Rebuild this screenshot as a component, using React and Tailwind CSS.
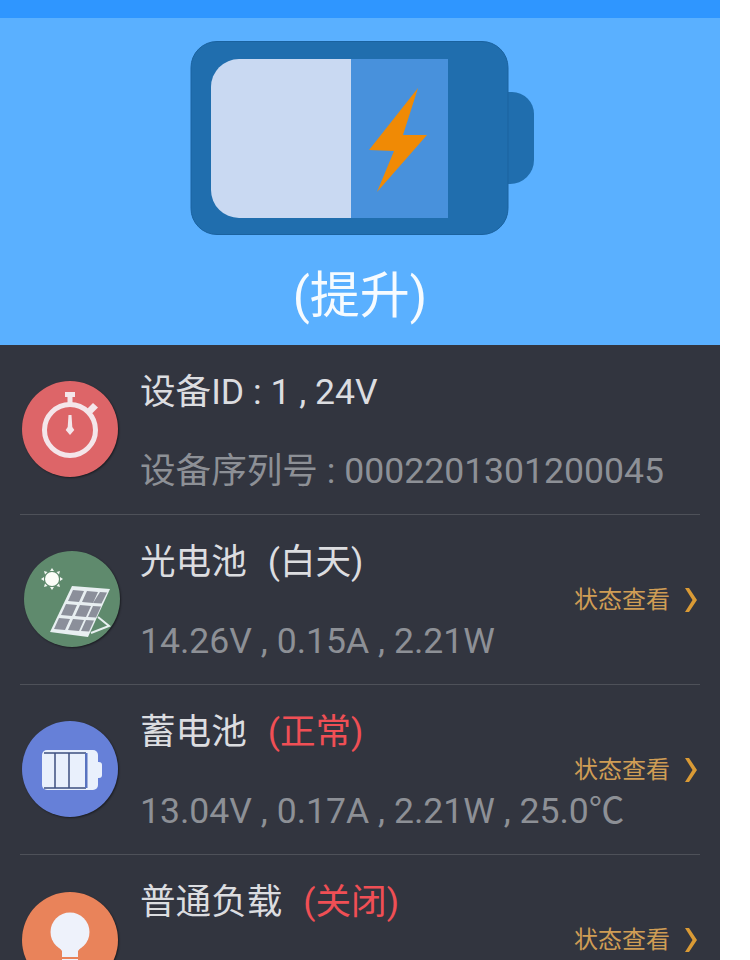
import React from 'react';

const BatteryHero = () => (
  <svg width="344" height="194" viewBox="0 0 344 194" className="block">
    <path d="M317 51 h5 a22 22 0 0 1 22 22 v46 a24 24 0 0 1 -24 24 h-3 z" fill="#206eae" />
    <rect x="1" y="0.500" width="317" height="193" rx="26" fill="#206eae" stroke="#1a629f" strokeWidth="1" />
    <path d="M161 18 v159 h-112 a28 28 0 0 1 -28 -28 v-103 a28 28 0 0 1 28 -28 z" fill="#c9d9f2" />
    <rect x="161" y="18" width="97" height="159" fill="#4891dc" />
    <path d="M228 47 L179 109 L204 110 L187 151 L237 94 L213 94 Z" fill="#f08a05" />
  </svg>
);

const StopwatchIcon = () => (
  <svg width="96" height="96" viewBox="0 0 96 96">
    <circle cx="48" cy="49" r="25.500" fill="none" stroke="#f4e6ea" strokeWidth="5" />
    <path d="M43 11 h10 v5 h-2.500 v8 h-5 v-8 h-2.500 z" fill="#f4e6ea" />
    <path d="M65 28 l6 -6 l5 4.500 l-6 6 z" fill="#f4e6ea" />
    <path d="M46.500 34 h3 l.8 12 l2 3 l-4.300 5 l-4.300 -5 l2 -3 z" fill="#f4e6ea" />
  </svg>
);

const SolarIcon = () => (
  <svg width="96" height="96" viewBox="0 0 96 96">
    <circle cx="28" cy="28" r="7" fill="#fbfdf8" />
    <g fill="#f2f7f2">
      <path d="M28 17 l-2 3 h4 z" />
      <path d="M28 39 l-2 -3 h4 z" />
      <path d="M17 28 l3 -2 v4 z" />
      <path d="M39 28 l-3 -2 v4 z" />
      <path d="M20 20 l3.500 1 l-2.500 2.500 z" />
      <path d="M36 20 l-3.500 1 l2.500 2.500 z" />
      <path d="M20 36 l3.500 -1 l-2.500 -2.500 z" />
      <path d="M36 36 l-3.500 -1 l2.500 -2.500 z" />
    </g>
    <path d="M48 35 L86 38 L64 86 L26 81 Z" fill="#e8eff1" />
    <g fill="#8b8f9a">
      <path d="M49 39 l11 1 l-5 11 l-11 -1 z" />
      <path d="M63 40 l11 1 l-5 11 l-11 -1 z" />
      <path d="M76 41 l7 .5 l-5.500 11 l-8.500 -.5 z" />
      <path d="M42 53 l11 1 l-5 11 l-11 -1 z" />
      <path d="M56 54 l11 1 l-5 11 l-11 -1 z" />
      <path d="M69 55 l8 .5 l-5 11 l-8 -.5 z" />
      <path d="M35 67 l11 1 l-5 11 l-11 -1 z" />
      <path d="M49 68 l11 1 l-5 11 l-11 -1 z" />
      <path d="M62 69 l8 .5 l-5 11 l-8 -.5 z" />
    </g>
    <path d="M74 66 L85 75 L67 82" fill="none" stroke="#e8eff1" strokeWidth="2" />
  </svg>
);

const BatteryIcon = () => (
  <svg width="96" height="96" viewBox="0 0 96 96">
    <path d="M74 41 h3 a3 3 0 0 1 3 3 v10 a3 3 0 0 1 -3 3 h-3 z" fill="#e9f0fc" />
    <rect x="20" y="29" width="56" height="40" rx="5" fill="#e9f0fc" />
    <g fill="none" stroke="#3c4f7f" strokeWidth="1.500">
      <path d="M22 32 H64 M22 67 H64" />
      <path d="M33 32 V67" />
      <path d="M47 32 V67" />
    </g>
    <rect x="63" y="32" width="2.500" height="35" fill="#5873c0" />
  </svg>
);

const BulbIcon = () => (
  <svg width="96" height="96" viewBox="0 0 96 96">
    <circle cx="48" cy="40" r="19.500" fill="#eef2fb" />
    <path d="M36 54 h24 l-4 5 v6 h-16 v-6 z" fill="#eef2fb" />
    <rect x="40" y="67" width="16" height="3" fill="#eef2fb" />
  </svg>
);

const rows = [
  { icon: <StopwatchIcon />, color: 'bg-[#dd6568]', circle: 'ml-[2px] mb-[2px]', text: 'ml-[22px]', title: '设备ID : 1 , 24V', value: '设备序列号 : 0002201301200045' },
  { icon: <SolarIcon />, color: 'bg-[#5f8a6d]', circle: 'ml-[4px] mb-[2px]', text: 'ml-[20px]', title: '光电池', tag: '(白天)', tagColor: 'text-[#dcdde0]', value: '14.26V , 0.15A , 2.21W', link: true },
  { icon: <BatteryIcon />, color: 'bg-[#6680d8]', circle: 'ml-[2px] mb-[2px]', text: 'ml-[22px]', title: '蓄电池', tag: '(正常)', tagColor: 'text-[#f04f55]', value: '13.04V , 0.17A , 2.21W , 25.0℃', link: true },
  { icon: <BulbIcon />, color: 'bg-[#e9835a]', circle: 'ml-[2px]', text: 'ml-[22px]', title: '普通负载', tag: '(关闭)', tagColor: 'text-[#f04f55]', value: '', link: true },
];

const App = () => {
  return (
    <div className="w-[750px] h-[960px] overflow-hidden bg-white font-['Roboto','Noto_Sans_CJK_SC',sans-serif]">
      <div className="w-[720px] h-[960px] overflow-hidden bg-[#32353f]">
        {/* Status bar */}
        <div className="h-[18px] bg-[#2f96ff]" />

        {/* Battery panel */}
        <div className="h-[327px] bg-[#5ab0ff] flex flex-col items-center pt-[23px]">
          <div className="ml-[4px]">
            <BatteryHero />
          </div>
          <div className="mt-[31px] text-[50px] leading-[60px] text-[#f6fbff]">(提升)</div>
        </div>

        {/* Device rows */}
        <div className="px-5">
          {rows.map((row) => (
            <div key={row.title} className="h-[170px] border-b border-[#4e5159] flex items-center">
              <div className={`${row.circle} w-24 h-24 rounded-full shrink-0 shadow-[1px_1px_2px_rgba(0,0,0,0.45)] ${row.color}`}>
                {row.icon}
              </div>
              <div className={`flex-1 pt-[3px] ${row.text}`}>
                <div className="h-[40px] leading-[40px] text-[35.6px] text-[#dcdde0] whitespace-nowrap">
                  {row.title}
                  {row.tag && <span className={`ml-[21px] ${row.tagColor}`}>{row.tag}</span>}
                </div>
                <div className="mt-[39px] h-[40px] leading-[40px] text-[35.6px] text-[#8d9096] whitespace-nowrap">
                  {row.value}
                </div>
              </div>
              {row.link && (
                <div className="flex items-center shrink-0 -ml-[200px]">
                  <span className="text-[24px] leading-[30px] text-[#cf9d55]">状态查看</span>
                  <svg width="14" height="26" viewBox="0 0 14 26" className="ml-[14px] mr-[2px]">
                    <path d="M1 1 h4 l8 12 l-8 12 h-4 l7.500 -12 z" fill="#d99a35" />
                  </svg>
                </div>
              )}
            </div>
          ))}
        </div>
      </div>
    </div>
  );
};

export default App;
